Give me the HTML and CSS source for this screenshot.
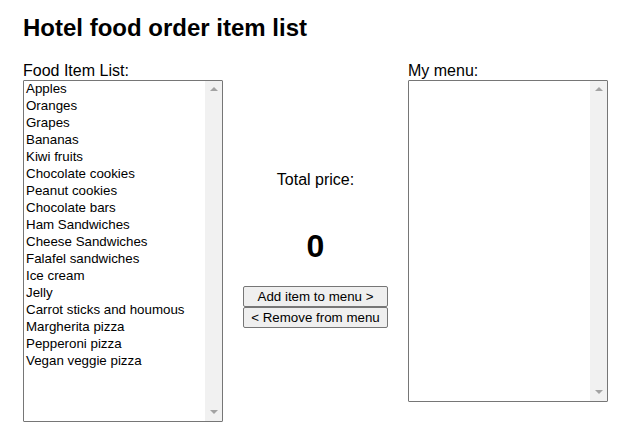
FILE: index.html
```html
<!DOCTYPE html>
<html>
<head>
<meta charset="utf-8">
<link rel="stylesheet" href="styles.css">
</head>
<body>
<div class="page">
  <h1 class="title">Hotel food order item list</h1>
  <div class="row">
    <div class="col">
      <label class="label">Food Item List:</label>
      <div class="listbox listbox-tall">
        <ul class="options">
          <li>Apples</li>
          <li>Oranges</li>
          <li>Grapes</li>
          <li>Bananas</li>
          <li>Kiwi fruits</li>
          <li>Chocolate cookies</li>
          <li>Peanut cookies</li>
          <li>Chocolate bars</li>
          <li>Ham Sandwiches</li>
          <li>Cheese Sandwiches</li>
          <li>Falafel sandwiches</li>
          <li>Ice cream</li>
          <li>Jelly</li>
          <li>Carrot sticks and houmous</li>
          <li>Margherita pizza</li>
          <li>Pepperoni pizza</li>
          <li>Vegan veggie pizza</li>
        </ul>
        <div class="scroll"><span class="arrow-up"></span><span class="arrow-down"></span></div>
      </div>
    </div>
    <div class="middle">
      <p class="total-label">Total price:</p>
      <p class="total">0</p>
      <div class="buttons">
        <button class="btn">Add item to menu &gt;</button>
        <button class="btn">&lt; Remove from menu</button>
      </div>
    </div>
    <div class="col">
      <label class="label">My menu:</label>
      <div class="listbox listbox-short">
        <ul class="options"></ul>
        <div class="scroll"><span class="arrow-up"></span><span class="arrow-down"></span></div>
      </div>
    </div>
  </div>
</div>
</body>
</html>
```

FILE: styles.css
```css
* { box-sizing: border-box; }
html, body { margin: 0; padding: 0; background: #fff; }
body { font-family: "Liberation Sans", Arial, sans-serif; color: #000; }
.page { padding: 14px 23px 0 23px; }
.title {
  margin: 0;
  font-size: 24px;
  line-height: 28px;
  font-weight: bold;
}
.row {
  display: flex;
  align-items: flex-start;
  margin-top: 20px;
}
.col { width: 200px; display: flex; flex-direction: column; }
.label { font-size: 16px; line-height: 18px; display: block; }
.listbox {
  display: flex;
  border: 1px solid #767676;
  border-radius: 1px;
  background: #fff;
  overflow: hidden;
}
.listbox-tall { height: 342px; }
.listbox-short { height: 322px; }
.options {
  flex: 1;
  list-style: none;
  margin: -1px 0 0 0;
  padding: 0;
  font-size: 13.33px;
  line-height: 17px;
}
.options li { padding-left: 2px; }
.scroll {
  width: 17px;
  background: #f1f1f1;
  display: flex;
  flex-direction: column;
  justify-content: space-between;
  align-items: center;
  padding: 6px 0 7px 0;
}
.arrow-up {
  width: 0; height: 0;
  border-left: 4px solid transparent;
  border-right: 4px solid transparent;
  border-bottom: 4px solid #a3a3a3;
}
.arrow-down {
  width: 0; height: 0;
  border-left: 4px solid transparent;
  border-right: 4px solid transparent;
  border-top: 4px solid #a3a3a3;
}
.middle {
  width: 185px;
  display: flex;
  flex-direction: column;
  align-items: center;
  padding-top: 109px;
}
.total-label { margin: 0; font-size: 16px; line-height: 18px; }
.total {
  margin: 39px 0 0 0;
  font-size: 32px;
  line-height: 37px;
  font-weight: bold;
}
.buttons {
  margin-top: 21px;
  display: flex;
  flex-direction: column;
  width: 145px;
  gap: 0;
}
.btn {
  font-family: "Liberation Sans", Arial, sans-serif;
  font-size: 13.33px;
  height: 21px;
  padding: 0 6px;
  border: 1px solid #767676;
  border-radius: 2px;
  background: #efefef;
  color: #000;
}
```
